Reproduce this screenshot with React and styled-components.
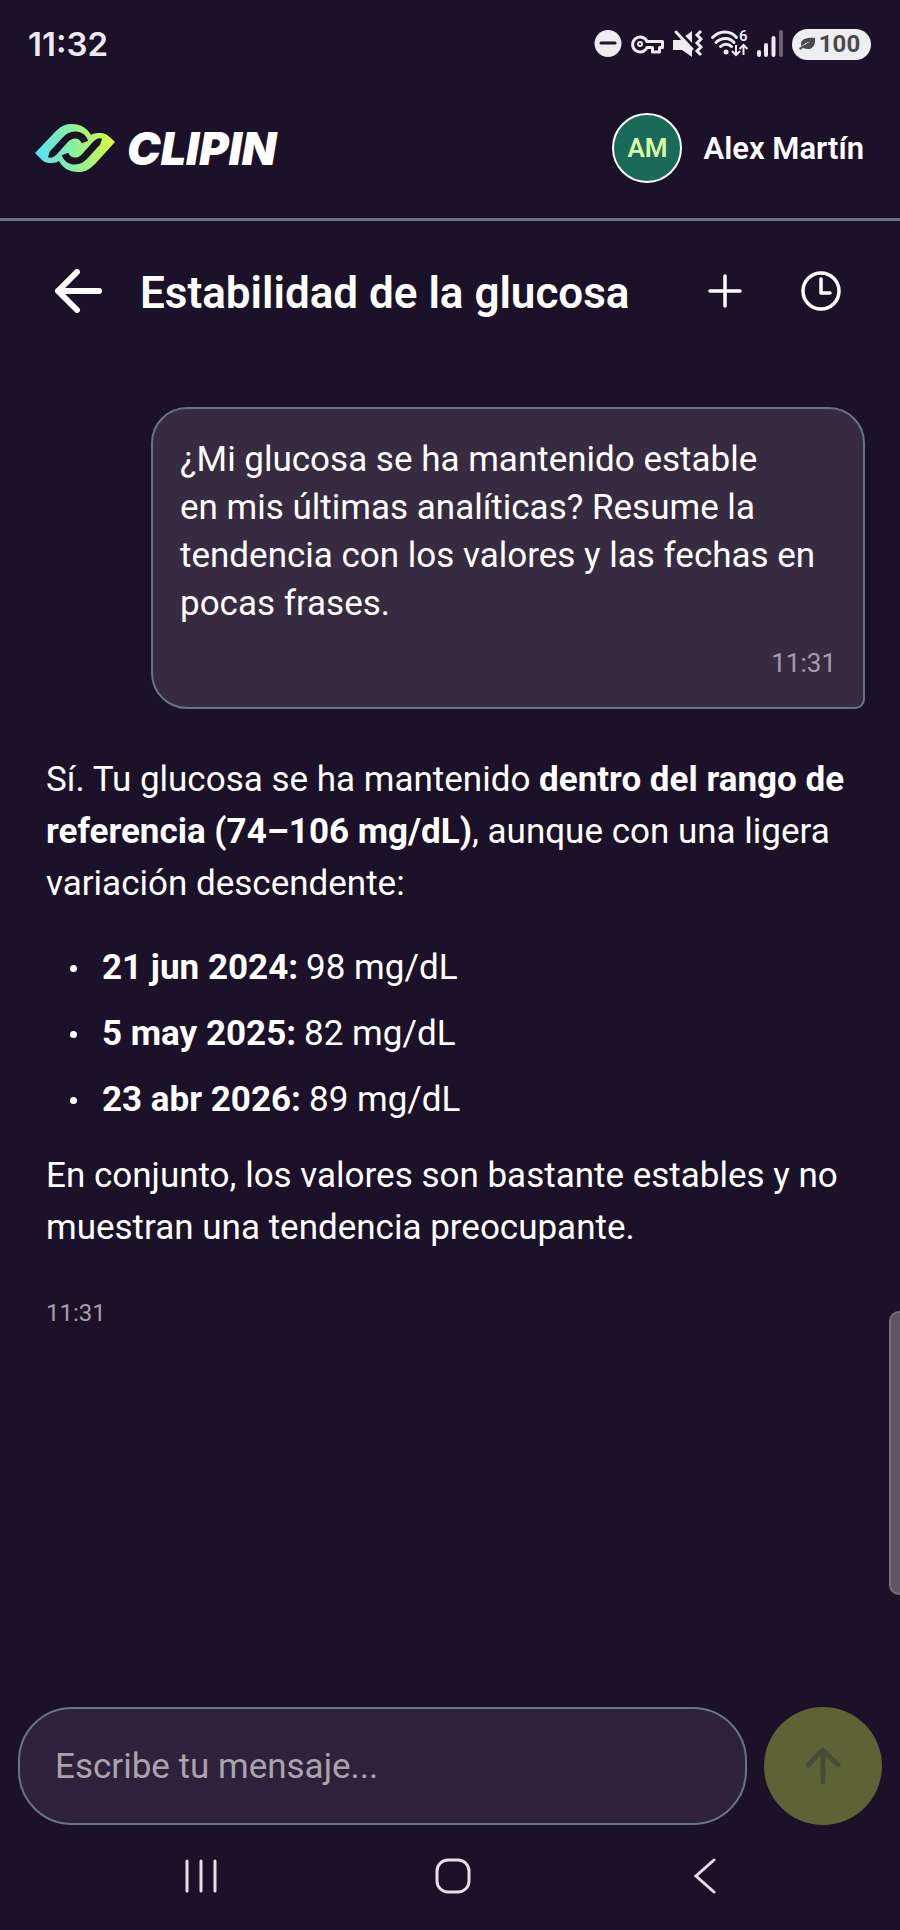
import React, { useState } from "react";
import styled, { createGlobalStyle } from "styled-components";

const GlobalStyle = createGlobalStyle`
  * {
    box-sizing: border-box;
  }
  body {
    margin: 0;
    background: #1b1128;
    color: #ffffff;
    font-family: Roboto, "Liberation Sans", sans-serif;
  }
  button {
    display: flex;
    align-items: center;
    justify-content: center;
    padding: 0;
    border: 0;
    background: none;
    color: inherit;
    cursor: pointer;
  }
  svg {
    display: block;
    flex: none;
  }
`;

const READINGS = [
  { date: "21 jun 2024:", value: "98 mg/dL" },
  { date: "5 may 2025:", value: "82 mg/dL" },
  { date: "23 abr 2026:", value: "89 mg/dL" },
];

const StatusIcons = () => (
  <svg width="190" height="32" viewBox="0 0 190 32" fill="none" aria-hidden="true">
    {/* do not disturb */}
    <circle cx="14" cy="15.5" r="13.5" fill="#eeeaf1" />
    <path d="M7 15h14" stroke="#1b1128" strokeWidth="3" strokeLinecap="round" />
    {/* vpn key */}
    <g stroke="#eeeaf1" strokeWidth="3" strokeLinejoin="round">
      <path d="M53 13.5H68.5V19.5H65.5V24H58.5V19.5H53A7.5 7.5 0 1 1 53 13.5Z" />
      <circle cx="46" cy="16" r="2" strokeWidth="2" />
    </g>
    {/* vibrate */}
    <path d="M79 12h7L98 3v26l-10-7h-9z" fill="#eeeaf1" />
    <path d="M80 -1l20 21" stroke="#1b1128" strokeWidth="4" />
    <path d="M82 4l16 17" stroke="#eeeaf1" strokeWidth="3" strokeLinecap="round" />
    <path d="M107 3l-4 4 4 4-4 4 4 4-4 4 4 4" stroke="#eeeaf1" strokeWidth="3" />
    {/* wifi */}
    <g stroke="#eeeaf1" strokeWidth="3" strokeLinecap="round">
      <path d="M118.5 9.5c7-7.5 18-7.5 24 0M122 14.5c5-5.5 14-5.5 18 0M126.5 18.5c3-3 8-3 11 0" />
    </g>
    <circle cx="132" cy="24" r="2.5" fill="#eeeaf1" />
    <path
      d="M142 17v10m-4-4 4 4 4-4M149.5 27V17m-4 4 4-4 4 4"
      stroke="#eeeaf1"
      strokeWidth="2"
    />
    <text x="145" y="13" fill="#eeeaf1" fontSize="15" fontWeight="600">
      6
    </text>
    {/* signal */}
    <g stroke="#eeeaf1" strokeWidth="4" strokeLinecap="round">
      <path d="M165 24v3M172 17v10M179.5 10v17" />
      <path d="M187 4v23" stroke="#6b6276" />
    </g>
  </svg>
);

const Leaf = () => (
  <svg width="17" height="14" viewBox="0 0 17 14" aria-hidden="true">
    <path d="M16 1C8 0 2 2 2 7c0 1 0 2 1 2C5 7 8 5 11 5 8 6 4 9 0 11l1 2 3-2c7 3 13 0 12-10Z" fill="#4b4a4d" />
  </svg>
);

const LogoMark = () => (
  <svg width="80" height="48" viewBox="0 0 80 48" fill="none" aria-hidden="true">
    <defs>
      <linearGradient id="brand" x1="0" y1="30" x2="80" y2="18" gradientUnits="userSpaceOnUse">
        <stop offset="0" stopColor="#55e0fb" />
        <stop offset="0.5" stopColor="#8ff09a" />
        <stop offset="1" stopColor="#dffa3c" />
      </linearGradient>
    </defs>
    <path
      d="M0 29 20 8C27 1 31 0 37 0c9 0 15 4 19 11 3-2 6-2 10-2 5 0 9 4 14 9L60 40c-7 7-11 8-17 8-9 0-15-4-19-11-3 2-6 2-10 2-5 0-9-5-14-10Z"
      fill="url(#brand)"
    />
    <g stroke="#1b1128" strokeWidth="7">
      <path d="M14 30c3 1 4-1 6-3l10-11c7-8 17-6 20 2" />
      <path d="M66 18c-3-1-4 1-6 3L50 32c-7 8-17 6-20-2" />
    </g>
  </svg>
);

export default function App() {
  const [message, setMessage] = useState("");

  return (
    <S.Page>
      <GlobalStyle />
      <S.StatusBar>
        <S.Clock>11:32</S.Clock>
        <S.StatusGroup>
          <StatusIcons />
          <S.Battery>
            <Leaf />
            100
          </S.Battery>
        </S.StatusGroup>
      </S.StatusBar>

      <S.Header>
        <S.Brand href="#">
          <LogoMark />
          CLIPIN
        </S.Brand>
        <S.User>
          <S.Avatar>AM</S.Avatar>
          Alex Martín
        </S.User>
      </S.Header>

      <S.TitleBar>
        <S.IconButton aria-label="Volver">
          <svg width="48" height="44" viewBox="0 0 48 44" fill="none" stroke="#fff" strokeWidth="6" strokeLinecap="round" strokeLinejoin="round">
            <path d="M45 22H4M23 3 4 22l19 19" />
          </svg>
        </S.IconButton>
        <S.Title>Estabilidad de la glucosa</S.Title>
        <S.IconButton aria-label="Nueva conversación">
          <svg width="36" height="36" viewBox="0 0 36 36" stroke="#fff" strokeWidth="3.5" strokeLinecap="round">
            <path d="M18 3v30M3 18h30" />
          </svg>
        </S.IconButton>
        <S.IconButton aria-label="Historial">
          <svg width="40" height="40" viewBox="0 0 40 40" fill="none" stroke="#fff" strokeWidth="3.5" strokeLinecap="round" strokeLinejoin="round">
            <circle cx="20" cy="20" r="18" />
            <path d="M20 8v14h9" />
          </svg>
        </S.IconButton>
      </S.TitleBar>

      <S.Chat>
        <S.Question>
          <p>
            ¿Mi glucosa se ha mantenido estable en&nbsp;mis últimas analíticas?
            Resume la tendencia con los valores y las fechas en pocas frases.
          </p>
          <S.QuestionTime>11:31</S.QuestionTime>
        </S.Question>

        <S.Answer>
          <p>
            Sí. Tu glucosa se ha mantenido{" "}
            <strong>dentro del rango de referencia (74–106 mg/dL)</strong>,
            aunque con una ligera variación descendente:
          </p>
          <S.Readings>
            {READINGS.map(({ date, value }) => (
              <S.Reading key={date}>
                <strong>{date}</strong> {value}
              </S.Reading>
            ))}
          </S.Readings>
          <p>
            En conjunto, los valores son bastante estables y no muestran una
            tendencia preocupante.
          </p>
          <S.AnswerTime>11:31</S.AnswerTime>
        </S.Answer>
      </S.Chat>

      <S.Composer onSubmit={e => e.preventDefault()}>
        <S.Input
          aria-label="Mensaje"
          placeholder="Escribe tu mensaje..."
          value={message}
          onChange={e => setMessage(e.target.value)}
        />
        <S.Send aria-label="Enviar">
          <svg width="36" height="38" viewBox="0 0 36 38" fill="none" stroke="#484b36" strokeWidth="5" strokeLinecap="round" strokeLinejoin="round">
            <path d="M18 35V4M3 18 18 3l15 15" />
          </svg>
        </S.Send>
      </S.Composer>

      <S.NavBar>
        <S.NavButton aria-label="Recientes">
          <svg width="36" height="36" viewBox="0 0 36 36" stroke="#e6dfe8" strokeWidth="3" strokeLinecap="round">
            <path d="M4 3v30M18 3v30M32 3v30" />
          </svg>
        </S.NavButton>
        <S.NavButton aria-label="Inicio">
          <svg width="36" height="36" viewBox="0 0 36 36" fill="none" stroke="#e6dfe8" strokeWidth="3">
            <rect x="2" y="2" width="32" height="32" rx="11" />
          </svg>
        </S.NavButton>
        <S.NavButton aria-label="Atrás">
          <svg width="36" height="36" viewBox="0 0 36 36" fill="none" stroke="#e6dfe8" strokeWidth="3" strokeLinecap="round">
            <path d="M27 2 9 18l18 16" />
          </svg>
        </S.NavButton>
      </S.NavBar>

      <S.EdgeHandle />
    </S.Page>
  );
}

const S = {
  Page: styled.div`
    position: relative;
    display: flex;
    flex-direction: column;
    min-height: 100vh;
  `,
  StatusBar: styled.div`
    display: flex;
    align-items: center;
    justify-content: space-between;
    height: 88px;
    padding: 0 29px 0 28px;
  `,
  Clock: styled.time`
    color: #eeeaf1;
    font-family: Inter, sans-serif;
    font-size: 33px;
    font-weight: 600;
  `,
  StatusGroup: styled.div`
    display: flex;
    align-items: center;
    gap: 8px;
    color: #eeeaf1;
  `,
  Battery: styled.span`
    display: flex;
    align-items: center;
    justify-content: center;
    gap: 3px;
    width: 79px;
    height: 31px;
    padding-right: 4px;
    border-radius: 16px;
    background: #eeeef0;
    color: #4b4a4d;
    font-size: 24px;
    font-weight: 700;
  `,
  Header: styled.header`
    display: flex;
    align-items: center;
    justify-content: space-between;
    height: 133px;
    padding: 0 36px 10px 35px;
    border-bottom: 3px solid #667389;
  `,
  Brand: styled.a`
    display: flex;
    align-items: center;
    gap: 12px;
    color: #ffffff;
    font-family: Inter, sans-serif;
    font-size: 45px;
    font-style: italic;
    font-weight: 900;
    text-decoration: none;
  `,
  User: styled.div`
    display: flex;
    align-items: center;
    gap: 21px;
    font-size: 31px;
    font-weight: 600;
  `,
  Avatar: styled.span`
    display: flex;
    align-items: center;
    justify-content: center;
    width: 70px;
    height: 70px;
    border: 2px solid #ffffff;
    border-radius: 50%;
    background: #196a58;
    color: #dcf9a8;
    font-size: 26px;
  `,
  TitleBar: styled.div`
    display: flex;
    align-items: center;
    height: 140px;
    padding: 0 45px 0 44px;
  `,
  IconButton: styled.button`
    width: 68px;
    height: 68px;
    & + & {
      margin-left: 28px;
    }
  `,
  Title: styled.h1`
    flex: 1;
    margin: 0 0 0 28px;
    padding-top: 4px;
    font-size: 44px;
    font-weight: 600;
    line-height: 52px;
  `,
  Chat: styled.main`
    display: flex;
    flex: 1;
    flex-direction: column;
    padding: 46px 35px 0 46px;
    p {
      margin: 0;
    }
  `,
  Question: styled.section`
    margin-left: 105px;
    padding: 27px 27px 24px;
    border: 2px solid #667389;
    border-radius: 36px 36px 10px 36px;
    background: #372b42;
    font-size: 35px;
    line-height: 48px;
  `,
  QuestionTime: styled.time`
    display: block;
    margin-top: 15px;
    color: #a39fa6;
    font-size: 26px;
    line-height: 40px;
    text-align: right;
  `,
  Answer: styled.section`
    margin-top: 45px;
    font-size: 35px;
    line-height: 52px;
  `,
  Readings: styled.ul`
    margin: 32px 0 24px;
    padding: 0;
    list-style: none;
  `,
  Reading: styled.li`
    display: flex;
    align-items: center;
    gap: 8px;
    &::before {
      content: "";
      width: 7px;
      height: 7px;
      margin: 0 17px 0 24px;
      border-radius: 50%;
      background: #ffffff;
    }
    & + & {
      margin-top: 14px;
    }
  `,
  AnswerTime: styled.time`
    display: block;
    margin-top: 39px;
    color: #a39fa6;
    font-size: 24px;
    line-height: 40px;
  `,
  Composer: styled.form`
    display: flex;
    gap: 17px;
    padding: 0 18px;
  `,
  Input: styled.input`
    flex: 1;
    min-width: 0;
    height: 118px;
    padding: 0 35px;
    border: 2px solid #667389;
    border-radius: 54px;
    outline: none;
    background: #2d213b;
    color: #ffffff;
    font-family: inherit;
    font-size: 35px;
    &::placeholder {
      color: #a9a4a9;
      opacity: 1;
    }
  `,
  Send: styled.button`
    width: 118px;
    height: 118px;
    border-radius: 50%;
    background: #5d6334;
  `,
  NavBar: styled.nav`
    display: grid;
    grid-template-columns: repeat(3, 1fr);
    height: 105px;
    padding: 0 69px 4px 75px;
  `,
  NavButton: styled.button`
    width: 100%;
  `,
  EdgeHandle: styled.div`
    position: absolute;
    right: 0;
    bottom: 335px;
    width: 11px;
    height: 284px;
    border: 2px solid #75707b;
    border-right: 0;
    border-radius: 10px 0 0 10px;
    background: #5d5466;
  `,
};
